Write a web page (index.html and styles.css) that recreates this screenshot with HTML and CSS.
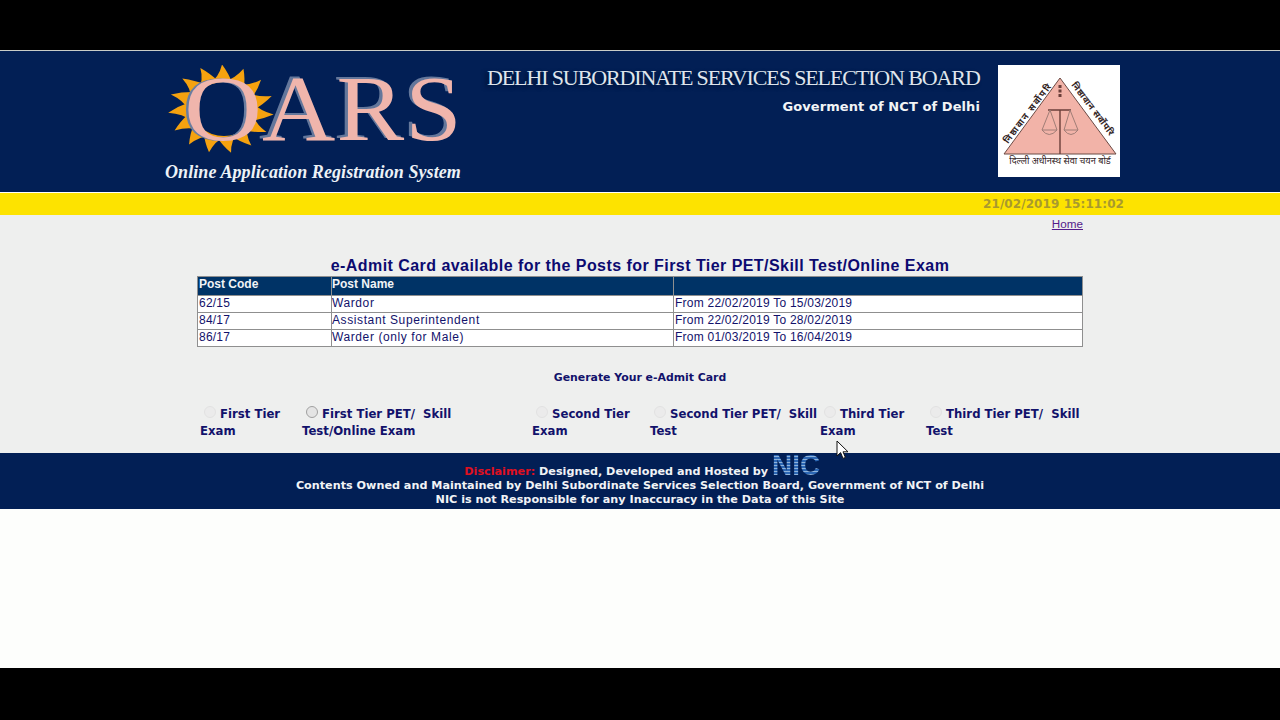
FILE: index.html
```html
<!DOCTYPE html>
<html>
	<head>
		<meta charset="utf-8">
		<title>OARS - Delhi Subordinate Services Selection Board</title>
		<link rel="stylesheet" href="styles.css">
	</head>
	<body>
		<div class="letterbox-top"></div>
		<div class="page">
			<div class="header">
				<div class="logo">
					<div class="logo-word">
						<svg class="sun" viewBox="-54 -44 108 88" width="108" height="88">
							<defs>
								<path id="ray" d="M-11 -31Q-2 -38 1 -53Q8 -42 11 -31Z" fill="#f5a20f"/>
							</defs>
							<g transform="scale(1 .84)">
								<use href="#ray"/>
								<use href="#ray" transform="rotate(24)"/>
								<use href="#ray" transform="rotate(48)"/>
								<use href="#ray" transform="rotate(72)"/>
								<use href="#ray" transform="rotate(96)"/>
								<use href="#ray" transform="rotate(120)"/>
								<use href="#ray" transform="rotate(144)"/>
								<use href="#ray" transform="rotate(168)"/>
								<use href="#ray" transform="rotate(192)"/>
								<use href="#ray" transform="rotate(216)"/>
								<use href="#ray" transform="rotate(240)"/>
								<use href="#ray" transform="rotate(264)"/>
								<use href="#ray" transform="rotate(288)"/>
								<use href="#ray" transform="rotate(312)"/>
								<use href="#ray" transform="rotate(336)"/>
								<circle r="35" fill="#f5a20f"/>
							</g>
							<ellipse cx="3" rx="32" ry="27" fill="#021f55"/>
						</svg>
						<span class="logo-o">O</span><span class="logo-ars">ARS</span>
					</div>
					<div class="logo-sub">Online Application Registration System</div>
				</div>
				<div class="board">
					<div class="board-name">DELHI SUBORDINATE SERVICES SELECTION BOARD</div>
					<div class="board-govt">Goverment of NCT of Delhi</div>
				</div>
				<div class="emblem">
					<svg viewBox="0 0 122 112" width="122" height="112">
						<polygon points="62,13 118,89 6,89" fill="#f2b3a8" stroke="#6b4a44" stroke-width="1"/>
						<path d="M62 45V89M50 45H73" stroke="#6b3f3a" stroke-width="1.4" fill="none"/>
						<path d="M52 45L44 65H59ZM72 45L66 65H80Z" stroke="#a07d76" stroke-width="1" fill="none"/>
						<path d="M44 65Q51 74 59 65M66 65Q73 74 80 65" stroke="#a07d76" stroke-width="1" fill="none"/>
						<path d="M62 20V33" stroke="#6b3f3a" stroke-width="3" stroke-dasharray="3 1.5"/>
						<path id="slope-left" d="M10 79L55 20" fill="none"/>
						<path id="slope-right" d="M73 20L113 73" fill="none"/>
						<text class="emblem-text emblem-slope"><textPath href="#slope-left" textLength="72">निष्ठावान सर्वोपरि</textPath></text>
						<text class="emblem-text emblem-slope"><textPath href="#slope-right" textLength="64">निष्ठावान सर्वोपरि</textPath></text>
						<text class="emblem-text" x="62" y="99" text-anchor="middle">दिल्ली अधीनस्थ सेवा चयन बोर्ड</text>
					</svg>
				</div>
			</div>
			<div class="clock-bar"><span class="clock">21/02/2019 15:11:02</span></div>
			<div class="main">
				<div class="home-row"><a class="home-link" href="#">Home</a></div>
				<h2 class="title">e-Admit Card available for the Posts for First Tier PET/Skill Test/Online Exam</h2>
				<table class="posts">
					<tr class="posts-head"><th class="col-code">Post Code</th><th class="col-name">Post Name</th><th></th></tr>
					<tr><td>62/15</td><td class="post-name">Wardor</td><td>From 22/02/2019 To 15/03/2019</td></tr>
					<tr><td>84/17</td><td class="post-name">Assistant Superintendent</td><td>From 22/02/2019 To 28/02/2019</td></tr>
					<tr><td>86/17</td><td class="post-name">Warder (only for Male)</td><td>From 01/03/2019 To 16/04/2019</td></tr>
				</table>
				<div class="generate">Generate Your e-Admit Card</div>
				<div class="tiers">
					<label class="tier"><span class="radio"></span> First Tier Exam</label>
					<label class="tier tier-wide"><span class="radio radio-dark"></span> First Tier PET/&nbsp; Skill Test/Online Exam</label>
					<label class="tier"><span class="radio"></span> Second Tier Exam</label>
					<label class="tier"><span class="radio"></span> Second Tier PET/&nbsp; Skill Test</label>
					<label class="tier"><span class="radio"></span> Third Tier Exam</label>
					<label class="tier"><span class="radio"></span> Third Tier PET/&nbsp; Skill Test</label>
				</div>
			</div>
			<div class="footer">
				<div class="footer-first"><span class="disclaimer">Disclaimer:</span> Designed, Developed and Hosted by <span class="nic">NIC</span></div>
				<div>Contents Owned and Maintained by Delhi Subordinate Services Selection Board, Government of NCT of Delhi</div>
				<div>NIC is not Responsible for any Inaccuracy in the Data of this Site</div>
			</div>
			<div class="blank"></div>
		</div>
		<div class="letterbox-bottom"></div>
		<svg class="cursor" viewBox="0 0 14 20" width="14" height="20">
			<path d="M1 1V16L4.6 12.6L7 18.4L9.4 17.4L7 11.8H12Z" fill="#fff" stroke="#111" stroke-width="1"/>
		</svg>
	</body>
</html>
```

FILE: styles.css
```css
html, body {
	margin: 0;
	height: 720px;
	overflow: hidden;
	background: #000;
}
body {
	display: flex;
	flex-direction: column;
	font-family: "DejaVu Sans", sans-serif;
}
.letterbox-top {
	height: 50px;
}
.letterbox-bottom {
	height: 52px;
}
.page {
	flex: 1;
	display: flex;
	flex-direction: column;
	background: #fdfefc;
}

.header {
	height: 142px;
	box-sizing: border-box;
	border-top: 1px solid #c9ccc8;
	background: #021f55;
	display: flex;
	padding-left: 165px;
}
.logo {
	width: 322px;
	display: flex;
	flex-direction: column;
}
.logo-word {
	position: relative;
	height: 104px;
	font-family: "Liberation Serif", serif;
	color: #f0b5ac;
	white-space: nowrap;
}
.sun {
	position: absolute;
	left: 2px;
	top: 14px;
}
.logo-o {
	position: absolute;
	left: 24px;
	top: 10px;
	font-size: 94px;
	line-height: 94px;
	transform: scaleX(1.15);
	text-shadow: -2px 0 0 #6a7da0;
}
.logo-ars {
	position: absolute;
	left: 97px;
	top: 10px;
	font-size: 94px;
	line-height: 94px;
	letter-spacing: 1px;
	transform: scaleX(1.08);
	transform-origin: left;
	text-shadow: -3px -2px 0 #64779b;
}
.logo-sub {
	margin-top: 7px;
	font-family: "Liberation Serif", serif;
	font-size: 18px;
	letter-spacing: .08px;
	font-weight: bold;
	font-style: italic;
	white-space: nowrap;
	color: #edf2f7;
}
.board {
	width: 493px;
	text-align: right;
}
.board-name {
	margin-top: 15px;
	padding-right: 2px;
	font-family: "Liberation Serif", serif;
	font-size: 22px;
	line-height: 23px;
	letter-spacing: -1.12px;
	white-space: nowrap;
	color: #dfe5ec;
	text-shadow: -3px 2px 4px #011030;
}
.board-govt {
	margin-top: 10px;
	font-size: 13px;
	line-height: 16px;
	letter-spacing: .08px;
	font-weight: bold;
	color: #f2f4f6;
}
.emblem {
	width: 122px;
	height: 112px;
	margin: 14px 0 0 18px;
	background: #fff;
}
.emblem svg {
	display: block;
}
.emblem-text {
	font-family: "Noto Sans", "DejaVu Sans", sans-serif;
	font-size: 9.2px;
	fill: #33241f;
}
.emblem-slope {
	font-size: 9px;
	font-weight: bold;
}

.clock-bar {
	height: 22px;
	margin-top: 1px;
	background: #fde300;
	display: flex;
	justify-content: flex-end;
	align-items: center;
	padding-right: 156px;
}
.clock {
	font-size: 12px;
	font-weight: bold;
	letter-spacing: .08px;
	color: #a99a2e;
}

.main {
	height: 238px;
	box-sizing: border-box;
	background: #eeefee;
	padding: 0 197px;
}
.home-row {
	height: 19px;
	padding-top: 2px;
	text-align: right;
	font-family: "Liberation Sans", sans-serif;
	font-size: 11.7px;
	line-height: 14px;
}
.home-link {
	color: #551a8b;
}
.title {
	margin: 20px 0 1px;
	height: 19px;
	font-family: "Liberation Sans", sans-serif;
	font-size: 16px;
	line-height: 19px;
	font-weight: bold;
	letter-spacing: .45px;
	text-align: center;
	white-space: nowrap;
	color: #0c0a70;
}
.posts {
	width: 886px;
	table-layout: fixed;
	border-collapse: collapse;
	font-family: "Liberation Sans", sans-serif;
	font-size: 12px;
	color: #12126b;
	background: #fff;
}
.posts th, .posts td {
	border: 1px solid #8f8f8f;
	height: 16px;
	padding: 0 1px;
	line-height: 14px;
	text-align: left;
	letter-spacing: .23px;
}
.posts td {
	vertical-align: top;
}
.posts td.post-name {
	padding-left: 0;
	letter-spacing: .6px;
}
.posts-head th {
	height: 18px;
	background: #003366;
	color: #f0f3f6;
	vertical-align: top;
	letter-spacing: 0;
}
.posts-head th.col-name {
	padding-left: 0;
}
.col-code {
	width: 131px;
}
.col-name {
	width: 340px;
}
.generate {
	margin-top: 23px;
	font-size: 10.9px;
	line-height: 16px;
	font-weight: bold;
	text-align: center;
	color: #12126b;
}
.tiers {
	margin: 20px 0 0 3px;
	display: grid;
	grid-template-columns: 102px 230px 118px 170px 106px 158px;
	font-size: 11.7px;
	line-height: 16px;
	font-weight: bold;
	color: #12126b;
}
.tier {
	display: block;
}
.tier-wide {
	padding-right: 70px;
}
.radio {
	display: inline-block;
	width: 12px;
	height: 12px;
	margin: 0 0 5px 4px;
	border-radius: 50%;
	border: 1px solid #e2e2e2;
	box-sizing: border-box;
	background: #ebebeb;
	vertical-align: middle;
}
.radio-dark {
	border-color: #a0a0a0;
	background: #e4e4e4;
}

.footer {
	height: 56px;
	box-sizing: border-box;
	background: #021f55;
	padding-top: 12px;
	font-size: 11.2px;
	line-height: 14px;
	font-weight: bold;
	text-align: center;
	color: #f1f3f6;
}
.footer-first {
	height: 14px;
}
.disclaimer {
	color: #e01020;
}
.nic {
	display: inline-block;
	height: 22px;
	margin: -11px -8px 0 0;
	vertical-align: top;
	font-family: "Liberation Sans", sans-serif;
	font-size: 30px;
	line-height: 22px;
	transform: scaleX(.93);
	transform-origin: left;
	color: transparent;
	background: repeating-linear-gradient(#2d68b5 0 2px, #8fb4dc 2px 3px);
	-webkit-background-clip: text;
	background-clip: text;
}
.blank {
	flex: 1;
}
.cursor {
	position: absolute;
	left: 836px;
	top: 440px;
}
```
